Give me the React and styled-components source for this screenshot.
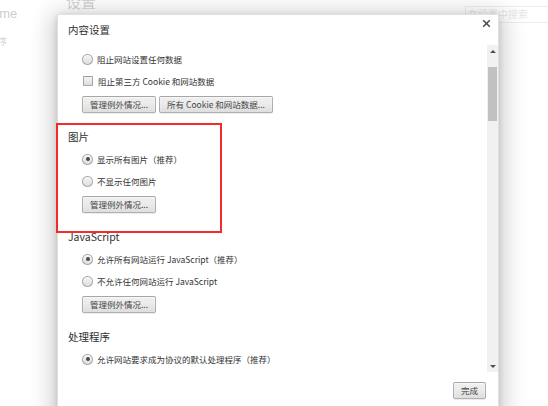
import React from "react";
import styled, { createGlobalStyle } from "styled-components";

const GlobalStyle = createGlobalStyle`
  html, body {
    margin: 0;
    padding: 0;
    background: #fff;
  }
  body {
    font-family: "Noto Sans CJK SC", "Noto Sans", sans-serif;
    overflow: hidden;
  }
`;

const Page = styled.div`
  position: relative;
  width: 548px;
  height: 406px;
  overflow: hidden;
  display: flex;
  background: #fff;
`;

/* settings page behind the dialog */

const Sidebar = styled.nav`
  width: 95px;
  margin-left: -29px;
  padding-top: 6px;
  display: flex;
  flex-direction: column;
  flex-shrink: 0;
`;

const Brand = styled.div`
  font-family: "Liberation Sans", Arial, sans-serif;
  font-size: 13px;
  line-height: 16px;
  color: #303030;
`;

const NavItem = styled.div`
  margin-top: 14px;
  font-size: 9px;
  line-height: 12px;
  color: #444;
`;

const Main = styled.div`
  flex: 1;
  display: flex;
  justify-content: space-between;
  align-items: flex-start;
`;

const PageTitle = styled.div`
  margin-top: -6px;
  font-size: 15px;
  line-height: 16px;
  color: #555;
`;

const Search = styled.div`
  margin-top: 6px;
  margin-right: -17px;
  width: 100px;
  height: 17px;
  box-sizing: border-box;
  border: 1px solid #bbb;
  padding-left: 2px;
  font-size: 10px;
  line-height: 13px;
  color: #999;
`;

/* modal */

const Overlay = styled.div`
  position: absolute;
  inset: 0;
  background: rgba(255, 255, 255, 0.75);
  padding: 14px 0 0 57px;
`;

const Dialog = styled.div`
  width: 442px;
  height: 420px;
  box-sizing: border-box;
  background: #fff;
  border: 1px solid rgba(0, 0, 0, 0.12);
  border-radius: 2px;
  box-shadow: 0 4px 23px 5px rgba(0, 0, 0, 0.2), 0 2px 6px rgba(0, 0, 0, 0.15);
  display: flex;
  flex-direction: column;
`;

const Header = styled.div`
  height: 30px;
  display: flex;
  justify-content: space-between;
  align-items: flex-start;
  padding: 0 7px 0 10px;
`;

const Title = styled.h1`
  margin: 7px 0 0;
  font-size: 10.5px;
  font-weight: normal;
  line-height: 16px;
  color: #303030;
`;

const Close = styled.div`
  margin-top: 4px;
  width: 9px;
  height: 9px;
  display: flex;
`;

const Body = styled.div`
  height: 327px;
  display: flex;
`;

const Content = styled.div`
  flex: 1;
  padding: 3px 0 0 10px;
`;

const Section = styled.section`
  position: relative;
  margin-top: 16px;
  &:first-child {
    margin-top: 0;
  }
`;

const Highlight = styled.div`
  position: absolute;
  top: -6px;
  left: -12px;
  width: 166px;
  height: 110px;
  box-sizing: border-box;
  border: 2px solid #f52a2a;
  pointer-events: none;
`;

const Heading = styled.h3`
  margin: 0;
  font-size: 10.5px;
  font-weight: normal;
  line-height: 16px;
  color: #303030;
`;

const Options = styled.div`
  padding-left: 14px;
  margin-top: ${(p) => (p.$headed ? "3px" : "0")};
`;

const Row = styled.div`
  height: 22px;
  display: flex;
  align-items: center;
  gap: 4px;
  font-size: 8.5px;
  line-height: 12px;
  color: #333;
`;

const Radio = styled.span`
  position: relative;
  width: 11px;
  height: 11px;
  box-sizing: border-box;
  border-radius: 50%;
  border: 1px solid rgba(0, 0, 0, 0.28);
  background: linear-gradient(#f4f4f4, #dedede);
  box-shadow: inset 0 1px 1px rgba(255, 255, 255, 0.8);
  flex-shrink: 0;
  &::after {
    content: "";
    display: ${(p) => (p.$checked ? "block" : "none")};
    position: absolute;
    left: 2.5px;
    top: 2.5px;
    width: 4px;
    height: 4px;
    border-radius: 50%;
    background: #4a4a4a;
  }
`;

const Checkbox = styled.span`
  width: 10px;
  height: 10px;
  margin-left: 1px;
  margin-right: 1px;
  box-sizing: border-box;
  border-radius: 1px;
  border: 1px solid rgba(0, 0, 0, 0.3);
  background: linear-gradient(#f4f4f4, #dedede);
  flex-shrink: 0;
`;

const ButtonRow = styled.div`
  display: flex;
  gap: 3px;
  margin-top: 4px;
`;

const Button = styled.button`
  height: 17px;
  padding: 0 7px;
  margin: 0;
  border: 1px solid rgba(0, 0, 0, 0.25);
  border-radius: 2px;
  background: linear-gradient(#ededed, #ededed 38%, #dedede);
  box-shadow: 0 1px 0 rgba(0, 0, 0, 0.08), inset 0 1px 2px rgba(255, 255, 255, 0.75);
  font-family: inherit;
  font-size: 8.5px;
  line-height: 15px;
  color: #444;
  white-space: nowrap;
`;

const Scrollbar = styled.div`
  width: 11px;
  background: #f1f1f1;
  display: flex;
  flex-direction: column;
  align-items: center;
`;

const Arrow = styled.div`
  height: 12px;
  width: 100%;
  display: flex;
  align-items: center;
  justify-content: center;
  &::before {
    content: "";
    width: 0;
    height: 0;
    border-left: 3px solid transparent;
    border-right: 3px solid transparent;
    ${(p) => (p.$down ? "border-top" : "border-bottom")}: 3px solid #505050;
  }
`;

const Thumb = styled.div`
  margin-top: 10px;
  width: 9px;
  height: 54px;
  background: #c1c1c1;
`;

const Track = styled.div`
  flex: 1;
`;

const Footer = styled.div`
  display: flex;
  justify-content: flex-end;
  padding: 10px 12px 0 0;
`;

const Option = ({ type = "radio", checked, children }) => (
  <Row>
    {type === "radio" ? <Radio $checked={checked} /> : <Checkbox />}
    <span>{children}</span>
  </Row>
);

export default function App() {
  return (
    <>
      <GlobalStyle />
      <Page>
        <Sidebar>
          <Brand>Chrome</Brand>
          <NavItem>扩展程序</NavItem>
        </Sidebar>
        <Main>
          <PageTitle>设置</PageTitle>
          <Search>在设置中搜索</Search>
        </Main>

        <Overlay>
          <Dialog>
            <Header>
              <Title>内容设置</Title>
              <Close>
                <svg width="9" height="9" viewBox="0 0 9 9">
                  <path d="M1.2 1.2L7.8 7.8M7.8 1.2L1.2 7.8" stroke="#4d4d4d" strokeWidth="1.6" />
                </svg>
              </Close>
            </Header>

            <Body>
              <Content>
                <Section>
                  <Options>
                    <Option>阻止网站设置任何数据</Option>
                    <Option type="checkbox">阻止第三方 Cookie 和网站数据</Option>
                    <ButtonRow>
                      <Button>管理例外情况...</Button>
                      <Button>所有 Cookie 和网站数据...</Button>
                    </ButtonRow>
                  </Options>
                </Section>

                <Section>
                  <Highlight />
                  <Heading>图片</Heading>
                  <Options $headed>
                    <Option checked>显示所有图片（推荐）</Option>
                    <Option>不显示任何图片</Option>
                    <ButtonRow>
                      <Button>管理例外情况...</Button>
                    </ButtonRow>
                  </Options>
                </Section>

                <Section>
                  <Heading>JavaScript</Heading>
                  <Options $headed>
                    <Option checked>允许所有网站运行 JavaScript（推荐）</Option>
                    <Option>不允许任何网站运行 JavaScript</Option>
                    <ButtonRow>
                      <Button>管理例外情况...</Button>
                    </ButtonRow>
                  </Options>
                </Section>

                <Section>
                  <Heading>处理程序</Heading>
                  <Options $headed>
                    <Option checked>允许网站要求成为协议的默认处理程序（推荐）</Option>
                  </Options>
                </Section>
              </Content>

              <Scrollbar>
                <Arrow />
                <Thumb />
                <Track />
                <Arrow $down />
              </Scrollbar>
            </Body>

            <Footer>
              <Button>完成</Button>
            </Footer>
          </Dialog>
        </Overlay>
      </Page>
    </>
  );
}
